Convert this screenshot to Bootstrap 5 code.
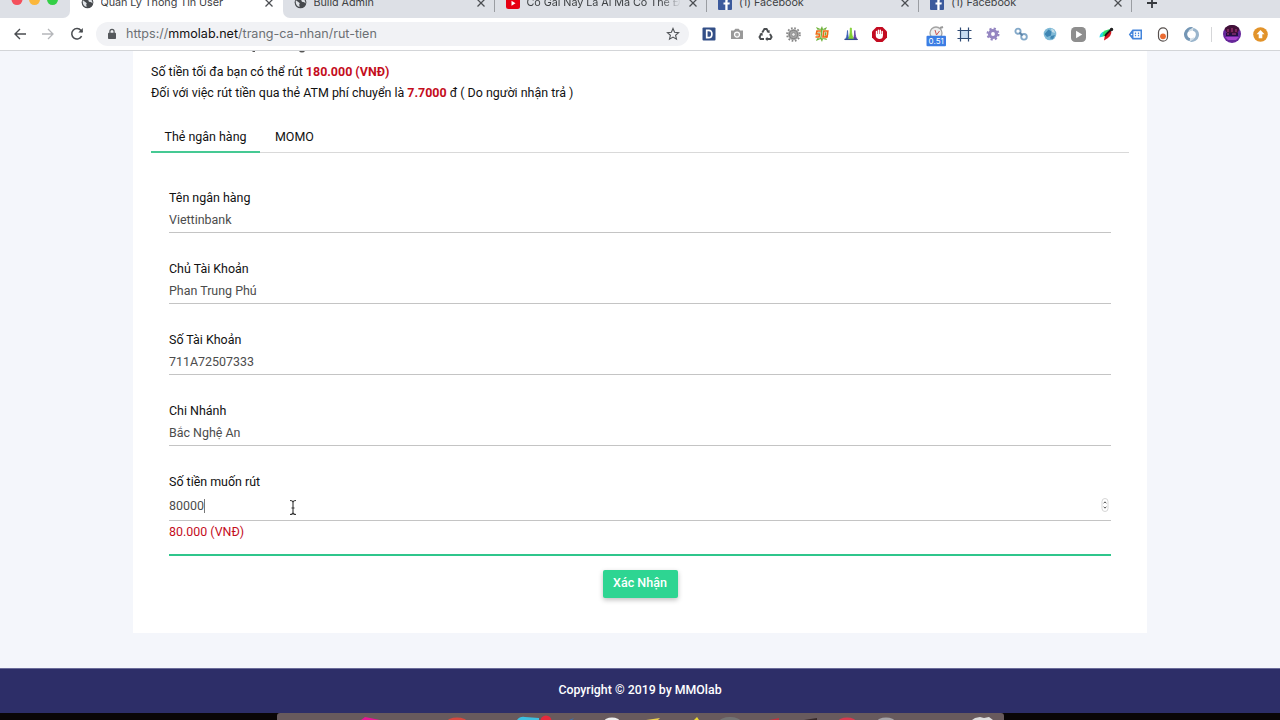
<!DOCTYPE html>
<html lang="vi">
<head>
<meta charset="utf-8">
<meta name="viewport" content="width=device-width, initial-scale=1">
<title>Quản Lý Thông Tin User</title>
<link rel="stylesheet" href="https://cdn.jsdelivr.net/npm/bootstrap@5.3.0/dist/css/bootstrap.min.css">
<style>
html,body{height:720px;overflow:hidden}
body{font-family:Roboto,"Liberation Sans",sans-serif;font-size:12.45px;line-height:21.4px;color:#111;background:#f4f6fb}
svg{display:block;flex:none}
.strip{height:18px;background:#dde0e6;overflow:hidden;align-items:flex-end;font-family:Inter,"Liberation Sans",sans-serif}
.strip>*{flex:none}
.lights{width:69.5px;height:18px;border-bottom-right-radius:7px;background:#dde0e6}
.lights-under{background:#fff}
.btab{width:212.4px;height:31px;padding:0 9px 0 11px;gap:7px;font-size:10.8px;color:#3d4043;background:#dde0e6}
.btab.now{background:#fff;width:213px}
.btab.after-now{border-bottom-left-radius:7px;width:212px}
.btab .ttl{flex:1 1 0;min-width:0;overflow:hidden;white-space:nowrap;letter-spacing:-.05px}
.btab .fade-end{-webkit-mask-image:linear-gradient(90deg,#000 87%,transparent);mask-image:linear-gradient(90deg,#000 87%,transparent)}
.vline{width:1px;height:23px;background:#9a9da2;margin-left:-1px;align-self:flex-end;margin-bottom:6px}
.toolbar{height:33px;border-bottom:1px solid #d3d5d8;background:#fff}
.navs{width:96px;padding-left:5.5px}
.slot{width:28.43px;height:28px;display:flex;align-items:center;justify-content:center;flex:none}
.omni{width:593px;height:24px;border-radius:12px;background:#f1f2f5;padding:0 9px 0 10px;font-family:Inter,"Liberation Sans",sans-serif;font-size:12.55px;color:#6c7074}
.omni .url{padding-left:8px}
.omni b{font-weight:400;color:#111}
.exts{padding-left:5.5px}
.viewport{height:617px}
.sheet{width:1014px;height:582px;background:#fff;padding:0 18px}
.remnant{height:9.5px}
.red{color:#c40d1c}
.switch{margin-top:23px;border-bottom:1px solid #d9d9d9;height:26.5px}
.switch a{height:27px;color:#111;text-decoration:none;padding:0 13.5px;line-height:21px}
.switch a.on{border-bottom:2px solid #45c993;width:108.5px;white-space:nowrap}
.switch a.momo{padding-left:15.5px}
.formx{padding:34px 18px 0}
.field{height:71px;line-height:22px}
.fval{height:24px;border-bottom:1px solid #c4c4c4;color:#4c4c4c;line-height:22px;margin-top:0}
.last-field .fval{height:26px;margin-top:3px;padding-right:2px}
.caret{width:1px;height:14px;background:#777}
.greenbar{height:2px;background:#2fc68c;margin-top:11px}
.okrow{padding-top:14px}
.okbtn{width:75px;height:28px;background:#2ed592;color:#fff;border:0;border-radius:2px;padding:0;font-size:12.5px;font-weight:500;box-shadow:0 2px 5px rgba(0,0,0,.25)}
.foot{height:45px;background:#2d2e68;border-top:1px solid #6a6b99;color:#fff;font-weight:500;font-size:12.35px}
.dockrow{height:7px;background:#0a0607}
.dock{width:727px;height:7px;background:#685a5d;border-radius:3px 3px 0 0;overflow:hidden}
.beam{left:288px;top:499px}
</style>
</head>
<body>
<svg width="0" height="0" class="position-absolute">
<defs>
<symbol id="globe" viewBox="0 0 14 14"><circle cx="7" cy="7" r="6.3" fill="#46494d"/><path d="M2 4.500l3 2.200 1.200 1.100-.6 1.600.6 2.200C3 11.400 1.300 8 2 4.500zM7 1.700l-1.200 2 2.200 1 .5 1.600 2.500.5 1.500 1.400C12.300 4 9.500 1.500 7 1.700z" fill="#dfe2e6"/></symbol>
<symbol id="cross" viewBox="0 0 10 10"><path d="M1.500 1.500l7 7M8.500 1.500l-7 7" stroke="#4c4f53" stroke-width="1.300"/></symbol>
<symbol id="fb" viewBox="0 0 14 14"><rect width="14" height="14" rx="1" fill="#3c5a9c"/><path d="M9.600 14V8.600h1.900l.3-2.200H9.600V5c0-.7.300-1.100 1.100-1.100h1.200V2c-2.600-.4-4.600.3-4.600 2.800v1.600H5.500v2.200h1.800V14z" fill="#fff"/></symbol>
<symbol id="cog" viewBox="0 0 16 16"><circle cx="8" cy="8" r="4" fill="none" stroke="currentColor" stroke-width="3.600"/><circle cx="8" cy="8" r="6.300" fill="none" stroke="currentColor" stroke-width="2.300" stroke-dasharray="2.500 2.448"/></symbol>
<symbol id="finecog" viewBox="0 0 16 16"><circle cx="8" cy="8" r="6" fill="#a6a6a6"/><circle cx="8" cy="8" r="6.900" fill="none" stroke="#858585" stroke-width="1.800" stroke-dasharray="1.800 1.813"/><circle cx="8" cy="8" r="4.300" fill="none" stroke="#7d7d7d" stroke-width="1"/><circle cx="8" cy="8" r="1.900" fill="#eee" stroke="#777" stroke-width=".7"/></symbol>
</defs>
</svg>

<header>
  <div class="strip d-flex">
    <div class="lights-under"><div class="lights"><svg width="69" height="18"><circle cx="17" cy="-.5" r="5.500" fill="#f4505c"/><circle cx="34.500" cy="-.5" r="5.500" fill="#fbb73c"/><circle cx="52.500" cy="-.5" r="5.500" fill="#33cf46"/></svg></div></div>
    <div class="btab now d-flex align-items-center"><svg width="13" height="13"><use href="#globe"/></svg><span class="ttl">Quản Lý Thông Tin User</span><svg width="10" height="10"><use href="#cross"/></svg></div>
    <div class="lights-under"><div class="btab after-now d-flex align-items-center"><svg width="13" height="13"><use href="#globe"/></svg><span class="ttl">Build Admin</span><svg width="10" height="10"><use href="#cross"/></svg></div></div>
    <div class="vline"></div>
    <div class="btab d-flex align-items-center"><svg width="14" height="14" viewBox="0 0 14 14"><rect y="2" width="14" height="11" rx="2.500" fill="#e60012"/><path d="M5.500 4.800v5l4-2.500z" fill="#fff"/></svg><span class="ttl fade-end">Cô Gái Này Là Ai Mà Có Thể Đánh</span><svg width="10" height="10"><use href="#cross"/></svg></div>
    <div class="vline"></div>
    <div class="btab d-flex align-items-center"><svg width="14" height="14"><use href="#fb"/></svg><span class="ttl">(1) Facebook</span><svg width="10" height="10"><use href="#cross"/></svg></div>
    <div class="vline"></div>
    <div class="btab d-flex align-items-center"><svg width="14" height="14"><use href="#fb"/></svg><span class="ttl">(1) Facebook</span><svg width="10" height="10"><use href="#cross"/></svg></div>
    <div class="vline"></div>
    <div class="btab d-flex align-items-center" style="width:147px"><svg width="16" height="12" viewBox="0 0 16 12"><path d="M9 1v10M4 6h10" stroke="#36393d" stroke-width="1.800"/></svg></div>
  </div>

  <div class="toolbar d-flex align-items-center">
    <div class="navs d-flex">
      <div class="slot"><svg width="14" height="14" viewBox="0 0 14 14" fill="none" stroke="#494c50" stroke-width="1.400"><path d="M13 7H2M7 2L2 7l5 5"/></svg></div>
      <div class="slot"><svg width="14" height="14" viewBox="0 0 14 14" fill="none" stroke="#b5b7ba" stroke-width="1.300"><path d="M1 7h11M7 2l5 5-5 5"/></svg></div>
      <div class="slot"><svg width="14" height="14" viewBox="0 0 14 14" fill="none" stroke="#494c50" stroke-width="1.500"><path d="M11.600 9.200A5.200 5.200 0 1 1 11 3.500l1.300 1.400"/><path d="M12.800 1v4.500H8.300z" fill="#494c50" stroke="none"/></svg></div>
    </div>
    <div class="omni d-flex align-items-center">
      <svg width="12" height="12" viewBox="0 0 12 12"><rect x="2" y="4.800" width="8" height="6.200" rx=".8" fill="#55585c"/><path d="M3.900 5V3.500a2.100 2.100 0 0 1 4.200 0V5" fill="none" stroke="#55585c" stroke-width="1.200"/></svg>
      <span class="flex-grow-1 url">https://<b>mmolab.net</b>/trang-ca-nhan/rut-tien</span>
      <svg width="14" height="14" viewBox="0 0 14 14"><path d="M7 1.500l1.600 3.700 4 .4-3 2.700.9 3.900L7 10.100l-3.500 2.100.9-3.900-3-2.700 4-.4z" fill="none" stroke="#505357" stroke-width="1.100"/></svg>
    </div>
    <div class="exts d-flex align-items-center">
      <div class="slot"><svg width="14" height="14" viewBox="0 0 14 14"><rect x=".5" y=".5" width="13" height="13" rx="1" fill="#334f87"/><path d="M4.700 3.300v7.400h2c2 0 3.200-1.500 3.200-3.700S8.700 3.300 6.700 3.300z" fill="none" stroke="#fff" stroke-width="1.700"/></svg></div>
      <div class="slot"><svg width="14" height="14" viewBox="0 0 14 14"><path d="M1 3.500h3L5.300 1.800h3.400L10 3.500h3V12H1z" fill="#999"/><circle cx="7" cy="7.600" r="2.500" fill="#aaa" stroke="#fff" stroke-width="1.200"/></svg></div>
      <div class="slot"><svg width="15" height="15" viewBox="0 0 15 15" fill="none" stroke="#4a4d50" stroke-width="1.900"><path d="M4.300 5.500L6.400 2h2.200l1.600 2.700M12 7l1.600 3-1.200 2H8.700M6 12H2.600L1.500 10l1.800-3"/><path d="M11.600 3v3.300L8.500 5zM9.500 9.800v4.400L7.200 12zM1.200 7l3.200-1.500.4 3.200z" fill="#4a4d50" stroke="none"/></svg></div>
      <div class="slot"><svg width="15" height="15"><use href="#finecog"/></svg></div>
      <div class="slot"><svg width="16" height="16" viewBox="0 0 16 16"><path d="M8 0l1 3 4-2-1.500 3.500L15 8l-3.500 2.500L13 14l-4-1-1 3-1.500-3L2 15l1.500-4L1 8l3-3-2-4 4.500 2z" fill="#6fb23a"/><path d="M7 5H3L2.400 8H5.600L5 11H1.500M9.800 5h4l-.8 6H9zM11 9.500l2 2.300" fill="none" stroke="#fff" stroke-width="2.600"/><path d="M7 5H3L2.400 8H5.600L5 11H1.500M9.800 5h4l-.8 6H9zM11 9.500l2 2.300" fill="none" stroke="#ee6b16" stroke-width="1.700"/></svg></div>
      <div class="slot"><svg width="14" height="14" viewBox="0 0 14 14"><path d="M1 12.500q2-1 2.500-9 .5 8 2 9z" fill="#3b5fb5" stroke="#3b5fb5" stroke-width=".8"/><path d="M8.500 12.500q2-1 2.300-9 .5 8 2.700 9z" fill="#5d3da3" stroke="#5d3da3" stroke-width=".8"/><path d="M4 12.500Q6.300 10 6.300 1h1Q7.500 10 10 12.500z" fill="#7fcf32" stroke="#7fcf32" stroke-width=".8"/><path d="M.5 12.400h13" stroke="#334e8c" stroke-width="1.300"/></svg></div>
      <div class="slot"><svg width="15" height="15" viewBox="0 0 15 15"><path d="M4.500 0h6L15 4.500v6L10.500 15h-6L0 10.500v-6z" fill="#c30b20"/><path d="M4.500 7V4.500M6.400 7V3.200M8.300 7V3.200M10.200 8V4.500" stroke="#fff" stroke-width="1.400" stroke-linecap="round"/><path d="M3.800 7h7.100v2c0 2-1.300 3-3.300 3s-3.800-1.400-3.800-3z" fill="#fff"/></svg></div>
      <div class="slot"></div>
      <div class="slot"><svg width="22" height="22" viewBox="0 0 22 22" style="margin-top:3px"><circle cx="11" cy="8" r="6" fill="#eee" stroke="#a3a3a3" stroke-width="1.300"/><path d="M10 5l1.500 5 3-4" fill="none" stroke="#c55" /><path d="M15 3l3-1" stroke="#999" stroke-width="2"/><rect x="1.500" y="10.700" width="19.500" height="10.500" rx="1" fill="#3b7de4"/><text x="11.200" y="19" font-size="8" font-family="Inter,sans-serif" fill="#fff" text-anchor="middle">0.51</text></svg></div>
      <div class="slot"><svg width="15" height="15" viewBox="0 0 15 15"><rect x="3.500" y="3.500" width="8" height="8" fill="#c7dcf2"/><path d="M3.500.5v14M11.500.5v14M.5 3.500h14M.5 11.500h14" stroke="#2e4a74" stroke-width="1.200"/></svg></div>
      <div class="slot" style="color:#9485c1"><svg width="14" height="14"><use href="#cog"/></svg></div>
      <div class="slot"><svg width="14" height="14" viewBox="0 0 14 14" fill="none" stroke="#84a9c9" stroke-width="1.900"><circle cx="4" cy="4.200" r="2.600"/><circle cx="10" cy="9.800" r="2.800"/><path d="M5.500 5.500l3 3" stroke="#5d83a8"/></svg></div>
      <div class="slot"><svg width="14" height="14" viewBox="0 0 14 14"><circle cx="7" cy="7" r="6.300" fill="#7fb9d6"/><path d="M1.500 7l4-4.500 3 2-.5 4L4 10zM8 9l4-1-2 4-3-.5z" fill="#3f86b3"/><path d="M8 1.500l3 1.500 1 3-3-1z" fill="#c5dfea"/></svg></div>
      <div class="slot"><svg width="15" height="15" viewBox="0 0 14 14"><rect width="14" height="14" rx="4" fill="#8e8e8e"/><path d="M4.700 3.500v7L10.500 7z" fill="#fff"/></svg></div>
      <div class="slot"><svg width="15" height="15" viewBox="0 0 15 15"><path d="M1 10q1-6 10-8L7 9z" fill="#29e36a"/><path d="M.5 10.500q0-4 4-6l-1 5z" fill="#2bd9ea"/><path d="M5 13.500Q5 7 12 3q2 6-7 10.500z" fill="#d4161f"/><path d="M6 9Q8 6 13.500 1.500" stroke="#161616" stroke-width="1.800" fill="none"/><circle cx="12.500" cy="2.500" r="1.700" fill="#222"/></svg></div>
      <div class="slot"><svg width="15" height="13" viewBox="0 0 15 13"><path d="M.8 6.500L4.500 1.500H14v10H4.500z" fill="#4284db"/><rect x="5.500" y="3.200" width="7" height="6.600" fill="#fff"/><path d="M7.500 4.500v4M10.500 4.500v4" stroke="#4284db" stroke-width="1.300" stroke-dasharray="1.500 .8"/><circle cx="3.500" cy="6.500" r=".8" fill="#fff"/></svg></div>
      <div class="slot"><svg width="12" height="15" viewBox="0 0 12 15"><rect x="1.500" y=".8" width="9" height="13.400" rx="4.500" fill="#fff" stroke="#57504e" stroke-width="1.200"/><circle cx="6" cy="9.300" r="2.900" fill="#ea6b32"/></svg></div>
      <div class="slot"><svg width="15" height="15" viewBox="0 0 15 15" fill="none"><path d="M8.500 1.800a5.600 5.600 0 0 0-2.500 11" stroke="#7496b5" stroke-width="3.200"/><path d="M6.500 13.200a5.600 5.600 0 0 0 2.500-11" stroke="#9ab5cc" stroke-width="3.200"/><path d="M5 4l4-2.500M10 11l-4 2.500" stroke="#d4e0e9" stroke-width="1.500"/></svg></div>
      <div style="width:1px;height:15px;background:#d5d6d8;margin-left:5px"></div>
      <div class="slot" style="margin-left:5.500px"><svg width="18" height="18" viewBox="0 0 18 18"><circle cx="9" cy="9" r="9" fill="#66269a"/><path d="M1.500 4A9 9 0 0 1 16.500 4l-2 4H4z" fill="#421138"/><path d="M3 8h12v3H3z" fill="#241044"/><path d="M2 12h14l-3 3H5z" fill="#a945cf"/><path d="M5 4v3M9 3v4M13 4v3M4 9h2m3 0h4" stroke="#b83a84"/></svg></div>
      <div class="slot"><svg width="15" height="15" viewBox="0 0 15 15"><circle cx="7.500" cy="7.500" r="7.300" fill="#e2932a"/><path d="M7.500 3l4 4.300H9.300v4H5.700v-4H3.500z" fill="#fff"/></svg></div>
    </div>
  </div>
</header>

<main class="viewport">
  <div class="sheet mx-auto">
    <div class="remnant"><svg width="170" height="3" viewBox="0 0 170 3"><path d="M101.500 0h2.500v1h-2.500zM148 0h6q-1 1.500-3 1.500T148 0z" fill="#555"/></svg></div>
    <div>Số tiền tối đa bạn có thể rút <strong class="red">180.000 (VNĐ)</strong></div>
    <div>Đối với việc rút tiền qua thẻ ATM phí chuyển là <strong class="red">7.7000</strong> đ ( Do người nhận trả )</div>
    <nav class="switch d-flex"><a href="#" class="on">Thẻ ngân hàng</a><a href="#" class="momo">MOMO</a></nav>
    <div class="formx">
      <div class="field"><div>Tên ngân hàng</div><div class="fval">Viettinbank</div></div>
      <div class="field"><div>Chủ Tài Khoản</div><div class="fval">Phan Trung Phú</div></div>
      <div class="field"><div>Số Tài Khoản</div><div class="fval">711A72507333</div></div>
      <div class="field"><div>Chi Nhánh</div><div class="fval">Bắc Nghệ An</div></div>
      <div class="last-field"><div>Số tiền muốn rút</div>
        <div class="fval d-flex justify-content-between"><div class="d-flex align-items-center" style="height:22px">80000<span class="caret"></span></div>
        <svg width="8" height="14" viewBox="0 0 8 14" style="margin-top:3px"><rect x="1" y=".5" width="6" height="13" rx="3" fill="#fff" stroke="#d5d5d5"/><path d="M2.700 5.300L4 3.800l1.300 1.500M2.700 8.700L4 10.200l1.300-1.500" fill="none" stroke="#555" stroke-width="1"/></svg></div>
        <div class="red">80.000 (VNĐ)</div>
        <div class="greenbar"></div>
      </div>
      <div class="okrow"><button type="button" class="btn okbtn d-block mx-auto">Xác Nhận</button></div>
    </div>
  </div>
</main>
<footer class="foot d-flex align-items-center justify-content-center">Copyright © 2019 by MMOlab</footer>
<div class="dockrow d-flex justify-content-center">
  <div class="dock"><svg width="727" height="7" viewBox="0 0 727 7">
    <path d="M84 7l4-3 15 3z" fill="#e51894"/><ellipse cx="180" cy="9" rx="10" ry="4.500" fill="#d6483f"/><path d="M240 7q3-4 8-3l14 1v2z" fill="#3fc0e0"/><circle cx="269" cy="8" r="5.500" fill="#e62a3c"/><path d="M292 7l5-2-2 2z" fill="#3973b5"/><ellipse cx="335" cy="9" rx="8" ry="4.500" fill="#eee"/><path d="M369 7l14-2-2 2z" fill="#ecd050"/><path d="M417 7l3-3 2 3z" fill="#ecd832"/><ellipse cx="453" cy="9" rx="11" ry="5" fill="#747474"/><path d="M492 7l10-2v2z" fill="#bc3441"/><path d="M527 7l13-2v2z" fill="#37292b"/><ellipse cx="570" cy="9" rx="9" ry="4.500" fill="#d83a4f"/><ellipse cx="609" cy="9" rx="9" ry="4.500" fill="#a6a4a8"/><path d="M695 7l3-2 5-1 4 1 5-1 4 3z" fill="#ddd"/>
  </svg></div>
</div>
<svg class="beam position-absolute" width="10" height="17" viewBox="0 0 10 17"><path d="M2 1.500q3 0 3 2v10q0 2-3 2M8 1.500q-3 0-3 2v10q0 2 3 2M3.500 9h3" fill="none" stroke="#333" stroke-width="1.100"/></svg>
<script src="https://cdn.jsdelivr.net/npm/bootstrap@5.3.0/dist/js/bootstrap.bundle.min.js"></script>
</body>
</html>
